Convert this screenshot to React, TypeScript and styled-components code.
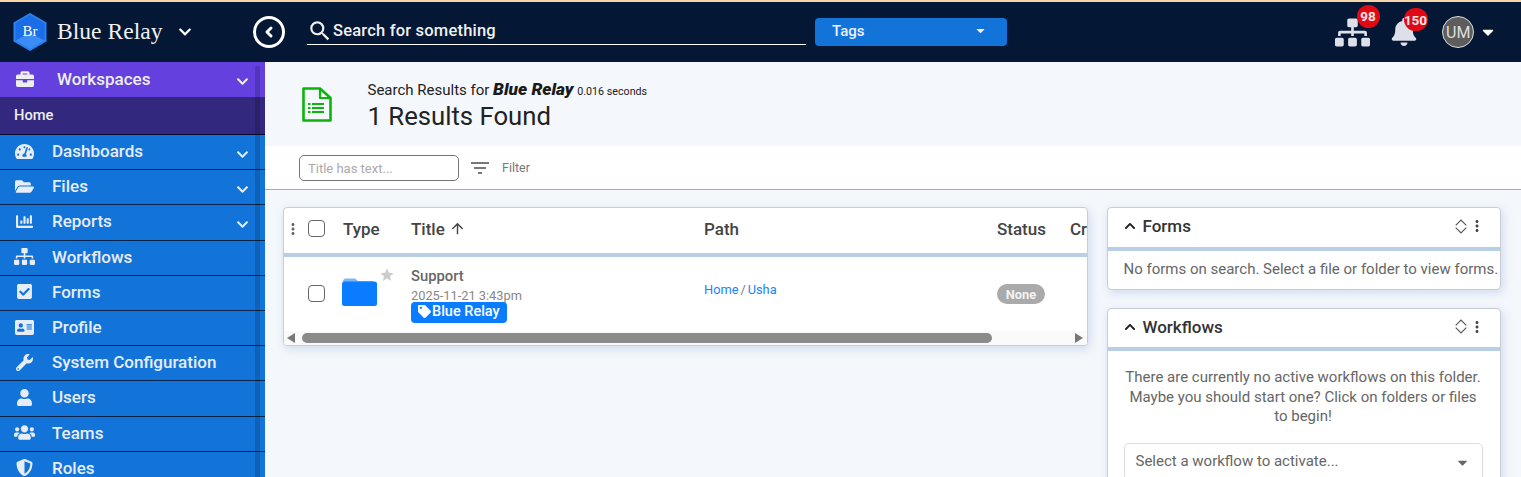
import React from "react";
import styled, { createGlobalStyle } from "styled-components";
import { FaBriefcase, FaTachometerAlt, FaFolderOpen, FaChartBar, FaSitemap, FaCheckSquare, FaAddressCard, FaWrench, FaUser, FaUsers, FaShieldAlt, FaBell, FaTag, FaChevronUp, FaChevronDown, FaCaretDown } from "react-icons/fa";
import { MdSearch, MdFilterList, MdArrowUpward, MdMoreVert, MdStar } from "react-icons/md";

const Global = createGlobalStyle`
  html, body { margin: 0; padding: 0; height: 100%; overflow: hidden; }
  body { font-family: Roboto, "Liberation Sans", sans-serif; background: #f4f7fc; }
  * { box-sizing: border-box; }
`;
const Page = styled.div`height: 477px; display: flex; flex-direction: column; overflow: hidden; border-top: 2px solid #f6d6a8;`;
const TopBar = styled.header`height: 60px; flex: none; background: #041836; display: flex; align-items: center; color: #fff;`;
const Brand = styled.div`width: 253px; flex: none; display: flex; align-items: center; padding-left: 13px;`;
const BrandName = styled.span`font-family: "Liberation Serif", serif; font-size: 23.6px; margin-left: 10px; color: #f0f0f0; line-height: 26px; margin-bottom: 2px;`;
const BrandCaret = styled.span`display: flex; margin-left: 15px; font-size: 14px;`;
const BackButton = styled.div`width: 32px; height: 32px; flex: none; border: 3px solid #fff; border-radius: 50%; display: flex; align-items: center; justify-content: center;`;
const SearchBox = styled.div`width: 499px; height: 30px; margin: 0 0 4px 22px; padding-top: 1px; border-bottom: 1px solid #fff; display: flex; align-items: center; font-size: 16.5px; font-weight: 500; letter-spacing: 0.2px; color: #f0f0f0;`;
const SearchIcon = styled.span`display: flex; font-size: 26px; margin-top: 1px;`;
const TagsButton = styled.div`width: 192px; height: 28px; margin-left: 9px; background: #1274d8; border-radius: 4px; display: flex; align-items: center; justify-content: space-between; padding: 0 20px 3px 17px; font-size: 15px; font-weight: 500; color: #eef;`;
const TopRight = styled.div`margin-left: auto; display: flex; align-items: center; padding-right: 24.5px;`;
const IconBadgeWrap = styled.div<{ $mr: number }>`position: relative; display: flex; color: #dde0e8; margin-right: ${(p) => p.$mr}px;`;
const Badge = styled.span<{ $w: number }>`position: absolute; top: -10px; right: -9.5px; width: ${(p) => p.$w}px; height: 23px; border-radius: 12px; background: #e00914; color: #f2e8e8; font-size: 13.5px; font-weight: 700; display: flex; align-items: center; justify-content: center;`;
const Avatar = styled.div`width: 32px; height: 32px; border-radius: 50%; background: #5d5d5d; border: 1px solid #ddd; display: flex; align-items: center; justify-content: center; font-size: 16px; color: #ddd;`;
const AvatarCaret = styled.span`display: flex; margin-left: 4.25px; color: #fff; font-size: 18px;`;

const Body = styled.div`flex: 1; display: flex; min-height: 0;`;
const Sidebar = styled.nav`width: 265px; flex: none; position: relative; background: #1274d8; overflow: hidden;`;
const SideScroll = styled.div`position: absolute; left: 255px; top: 4px; bottom: 0; width: 5px; border-radius: 3px 3px 0 0; background: rgba(0,0,0,0.16);`;
const WorkspaceRow = styled.div`height: 35px; background: #6440de; display: flex; align-items: center; padding: 0 0 2px 16px; color: #eee; font-size: 17px; font-weight: 500;`;
const HomeRow = styled.div`height: 38px; background: #32297e; border-bottom: 1px solid #0a0a30; display: flex; align-items: center; padding: 0 0 2px 14px; color: #eee; font-size: 14.7px; font-weight: 500;`;
const NavRow = styled.div`height: 35.2px; flex: none; border-bottom: 1px solid #04224a; display: flex; align-items: center; padding-bottom: 2px; color: #e6edf8; font-size: 17px; font-weight: 500;`;
const NavIcon = styled.span`width: 52px; flex: none; display: flex; justify-content: center; padding-right: 3px;`;
const WsIcon = styled.span`width: 41px; flex: none; display: flex; font-size: 18px;`;
const NavChev = styled.span`display: flex; margin-left: auto; margin-right: 16px; font-size: 13px; margin-top: 6px;`;

const Main = styled.main`flex: 1; min-width: 0; display: flex; flex-direction: column;`;
const Hero = styled.div`height: 84px; flex: none; background: #f4f7fc; display: flex; align-items: center; padding-left: 37px;`;
const HeroText = styled.div`margin-left: 35.5px; margin-top: 2px;`;
const HeroLine = styled.div`font-size: 15px; color: #222; line-height: 18px; white-space: nowrap;`;
const HeroTerm = styled.b`font-size: 17.3px; font-style: italic; font-weight: 900; color: #1a1a1a;`;
const HeroTime = styled.span`font-size: 10.7px; color: #222;`;
const HeroTitle = styled.div`font-size: 25.7px; color: #222; line-height: 30px;`;
const FilterBar = styled.div`height: 44px; flex: none; background: #fff; border-bottom: 1px solid #aaa; display: flex; align-items: center; padding-left: 34px;`;
const FilterInput = styled.div`width: 160px; height: 26px; border: 1px solid #777; border-radius: 5px; display: flex; align-items: center; padding: 1px 0 0 8px; color: #aaa; font-size: 13px;`;
const FilterIcon = styled.span`display: flex; margin-left: 9px; font-size: 24px; color: #777;`;
const FilterLabel = styled.span`margin-left: 10px; font-size: 12.5px; color: #777;`;
const Content = styled.div`flex: 1; min-height: 0; display: flex; align-items: flex-start; gap: 18.5px; padding: 17px 0 0 17.5px;`;

const Card = styled.section`background: #fff; border-radius: 4px; border: 1px solid #c8ccd4; box-shadow: 2px 3px 10px rgba(120,150,200,0.28);`;
const TableCard = styled(Card)`width: 805.5px; height: 139px; flex: none; overflow: hidden; display: flex; flex-direction: column;`;
const GridRow = styled.div`display: grid; grid-template-columns: 59.5px 68px 293px 293px 73px 100px; width: 886px;`;
const HeadRow = styled(GridRow)`height: 49px; flex: none; border-bottom: 4px solid #b8cfe5; align-items: center; font-size: 17px; font-weight: 500; color: #444; padding-bottom: 4px;`;
const HeadTick = styled.div`display: flex; align-items: center; color: #666; font-size: 18px;`;
const Check = styled.span`width: 17px; height: 17px; border: 1px solid #666; border-radius: 4px; display: block; background: #fff;`;
const HeadCheck = styled(Check)`margin-left: 6.5px;`;
const TitleHead = styled.div`display: flex; align-items: center; gap: 4px;`;
const TitleArrow = styled.span`display: flex; font-size: 17px;`;
const BodyRow = styled(GridRow)`height: 74px; flex: none;`;
const TickCell = styled.div`display: flex; align-items: center; padding: 0 0 1px 24.5px;`;
const TypeCell = styled.div`position: relative; padding-top: 21px; margin-left: -1px;`;
const StarMark = styled.span`position: absolute; left: 37px; top: 10px; display: flex; color: #ccc; font-size: 16px;`;
const TitleCell = styled.div`padding-top: 11px;`;
const RowName = styled.div`font-size: 14.8px; font-weight: 500; color: #666; line-height: 16px;`;
const RowDate = styled.div`font-size: 12.8px; color: #888; line-height: 14px; margin-top: 5px;`;
const TagPill = styled.div`display: inline-flex; align-items: center; height: 21px; width: 96px; background: #0a7cff; border-radius: 4px; color: #fff; font-size: 14.5px; font-weight: 500; padding: 0 0 2px 7px; gap: 1px; margin-top: -1px; position: relative;`;
const PathCell = styled.div`padding-top: 25px; font-size: 12.8px; color: #1a82ff; line-height: 15px;`;
const PathSep = styled.span`color: #777; margin: 0 2px;`;
const StatusCell = styled.div`padding-top: 27px;`;
const NonePill = styled.div`width: 48px; height: 20px; border-radius: 10px; background: #aaa; color: #f3f3f3; font-size: 12.8px; font-weight: 700; display: flex; align-items: center; justify-content: center;`;
const ScrollBar = styled.div`height: 14px; flex: none; background: #fafafa; display: flex; align-items: center; padding: 0 4px 0 3px;`;
const ScrollThumb = styled.div`width: 690px; height: 10px; border-radius: 5px; background: #8b8b8b; margin-left: 7.5px;`;
const Arrow = styled.span<{ $dir: "l" | "r" }>`width: 0; height: 0; border-top: 5px solid transparent; border-bottom: 5px solid transparent; ${(p) => p.$dir === "l" ? "border-right: 8px solid #777;" : "border-left: 8px solid #777; margin-left: auto;"}`;

const Side = styled.aside`width: 394px; flex: none; display: flex; flex-direction: column; gap: 18px;`;
const PanelHead = styled.div`height: 42.5px; border-bottom: 4px solid #b8cfe5; display: flex; align-items: center; padding: 0 14px 2px 16px; font-size: 17px; font-weight: 500; color: #333;`;
const PanelChev = styled.span`display: flex; font-size: 12px; margin-right: 7px; color: #222;`;
const PanelTools = styled.span`margin-left: auto; display: flex; align-items: center; color: #555;`;
const Dots = styled.span`display: flex; font-size: 18px; margin-left: 1px; color: #444;`;
const FormsText = styled.div`height: 37px; display: flex; align-items: center; padding-left: 16px; font-size: 15px; color: #666; white-space: nowrap;`;
const WorkflowBody = styled.div`padding: 17px 17px 0 16px; text-align: center; font-size: 15px; line-height: 19.5px; color: #666; height: 130px;`;
const SelectBox = styled.div`margin-top: 16.5px; height: 38px; border: 1px solid #ddd; border-radius: 5px; display: flex; align-items: center; justify-content: space-between; padding: 0 12px 0 11px; color: #666;`;
const SelectCaret = styled.span`display: flex; font-size: 15px; color: #666;`;
const FormsPanel = styled(Card)`height: 82.5px; overflow: hidden;`;
const WorkflowsPanel = styled(Card)`height: 190px; overflow: hidden;`;

const nav: { icon: React.ComponentType<{ size?: number }>; size: number; label: string; chev: boolean }[] = [
  { icon: FaTachometerAlt, size: 19, label: "Dashboards", chev: true },
  { icon: FaFolderOpen, size: 19, label: "Files", chev: true },
  { icon: FaChartBar, size: 17, label: "Reports", chev: true },
  { icon: FaSitemap, size: 21, label: "Workflows", chev: false },
  { icon: FaCheckSquare, size: 17, label: "Forms", chev: false },
  { icon: FaAddressCard, size: 19, label: "Profile", chev: false },
  { icon: FaWrench, size: 17, label: "System Configuration", chev: false },
  { icon: FaUser, size: 17, label: "Users", chev: false },
  { icon: FaUsers, size: 21, label: "Teams", chev: false },
  { icon: FaShieldAlt, size: 17, label: "Roles", chev: false },
];

const Logo = () => (
  <svg width="34" height="38" viewBox="0 0 34 38">
    <polygon points="17,0 33.5,9.5 33.5,28.5 17,38 .5,28.5 .5,9.5" fill="#2a82f2" />
    <polygon points="17,2 31.5,10.5 31.5,27.5 17,36 2.5,27.5 2.5,10.5" fill="#1a6de6" />
    <polygon points="2.5,27.5 17,20 31.5,27.5 17,36" fill="#3c8cf7" />
    <text x="17" y="22.5" textAnchor="middle" fontFamily="Liberation Serif, serif" fontSize="15" fill="#fff">Br</text>
  </svg>
);
const FileList = () => (
  <svg width="30" height="35" viewBox="0 0 30 35" fill="none" stroke="#0bb50b" strokeWidth="2.6" strokeLinejoin="round">
    <path d="M1.5 1.5H18L28.5 11V33.5H1.5Z" />
    <path d="M18 1.5V11H28.5" strokeWidth="2.2" />
    <path d="M10 17H22M10 21H22M10 25H22" strokeWidth="2.2" />
    <path d="M6 17H8.5M6 21H8.5M6 25H8.5" strokeWidth="2.2" />
  </svg>
);
const Folder = () => (
  <svg width="35" height="28" viewBox="0 0 35 28">
    <path d="M1 4C1 1.5 2 .5 4 .5H13L16 3H31V6H1Z" fill="#7db6f5" />
    <rect x="0" y="3.5" width="35" height="24.5" rx="2.5" fill="#0a7cff" />
  </svg>
);
const Diamond = () => (
  <svg width="12" height="15" viewBox="0 0 12 15" fill="none" stroke="#555" strokeWidth="1.1">
    <path d="M.7 6.3L6 1L11.3 6.3M.7 8.7L6 14L11.3 8.7" />
  </svg>
);
const BackIcon = () => (
  <svg width="12" height="14" viewBox="0 0 12 14" fill="none" stroke="#fff" strokeWidth="3" strokeLinecap="round" strokeLinejoin="round">
    <path d="M8 3L4 7L8 11" />
  </svg>
);

export default function App() {
  return (
    <Page>
      <Global />
      <TopBar>
        <Brand>
          <Logo />
          <BrandName>Blue Relay</BrandName>
          <BrandCaret><FaChevronDown /></BrandCaret>
        </Brand>
        <BackButton><BackIcon /></BackButton>
        <SearchBox>
          <SearchIcon><MdSearch /></SearchIcon>
          Search for something
        </SearchBox>
        <TagsButton>Tags <FaCaretDown size={13} /></TagsButton>
        <TopRight>
          <IconBadgeWrap $mr={20}>
            <FaSitemap size={35} />
            <Badge $w={23}>98</Badge>
          </IconBadgeWrap>
          <IconBadgeWrap $mr={24.25}>
            <FaBell size={28} />
            <Badge $w={24}>150</Badge>
          </IconBadgeWrap>
          <Avatar>UM</Avatar>
          <AvatarCaret><FaCaretDown /></AvatarCaret>
        </TopRight>
      </TopBar>
      <Body>
        <Sidebar>
          <WorkspaceRow>
            <WsIcon><FaBriefcase /></WsIcon>
            Workspaces
            <NavChev><FaChevronDown /></NavChev>
          </WorkspaceRow>
          <HomeRow>Home</HomeRow>
          {nav.map(({ icon: Icon, size, label, chev }) => (
            <NavRow key={label}>
              <NavIcon><Icon size={size} /></NavIcon>
              {label}
              {chev && <NavChev><FaChevronDown /></NavChev>}
            </NavRow>
          ))}
          <SideScroll />
        </Sidebar>
        <Main>
          <Hero>
            <FileList />
            <HeroText>
              <HeroLine>Search Results for <HeroTerm>Blue Relay</HeroTerm> <HeroTime>0.016 seconds</HeroTime></HeroLine>
              <HeroTitle>1 Results Found</HeroTitle>
            </HeroText>
          </Hero>
          <FilterBar>
            <FilterInput>Title has text...</FilterInput>
            <FilterIcon><MdFilterList /></FilterIcon>
            <FilterLabel>Filter</FilterLabel>
          </FilterBar>
          <Content>
            <TableCard>
              <HeadRow>
                <HeadTick><MdMoreVert /><HeadCheck /></HeadTick>
                <div>Type</div>
                <TitleHead>Title <TitleArrow><MdArrowUpward /></TitleArrow></TitleHead>
                <div>Path</div>
                <div>Status</div>
                <div>Created</div>
              </HeadRow>
              <BodyRow>
                <TickCell><Check /></TickCell>
                <TypeCell>
                  <Folder />
                  <StarMark><MdStar /></StarMark>
                </TypeCell>
                <TitleCell>
                  <RowName>Support</RowName>
                  <RowDate>2025-11-21 3:43pm</RowDate>
                  <TagPill><FaTag size={13} />Blue Relay</TagPill>
                </TitleCell>
                <PathCell>Home<PathSep>/</PathSep>Usha</PathCell>
                <StatusCell><NonePill>None</NonePill></StatusCell>
                <div />
              </BodyRow>
              <ScrollBar>
                <Arrow $dir="l" />
                <ScrollThumb />
                <Arrow $dir="r" />
              </ScrollBar>
            </TableCard>
            <Side>
              <FormsPanel>
                <PanelHead>
                  <PanelChev><FaChevronUp /></PanelChev>Forms
                  <PanelTools><Diamond /><Dots><MdMoreVert /></Dots></PanelTools>
                </PanelHead>
                <FormsText>No forms on search. Select a file or folder to view forms.</FormsText>
              </FormsPanel>
              <WorkflowsPanel>
                <PanelHead>
                  <PanelChev><FaChevronUp /></PanelChev>Workflows
                  <PanelTools><Diamond /><Dots><MdMoreVert /></Dots></PanelTools>
                </PanelHead>
                <WorkflowBody>
                  There are currently no active workflows on this folder. Maybe you should start one? Click on folders or files to begin!
                  <SelectBox>Select a workflow to activate...<SelectCaret><FaCaretDown /></SelectCaret></SelectBox>
                </WorkflowBody>
              </WorkflowsPanel>
            </Side>
          </Content>
        </Main>
      </Body>
    </Page>
  );
}
